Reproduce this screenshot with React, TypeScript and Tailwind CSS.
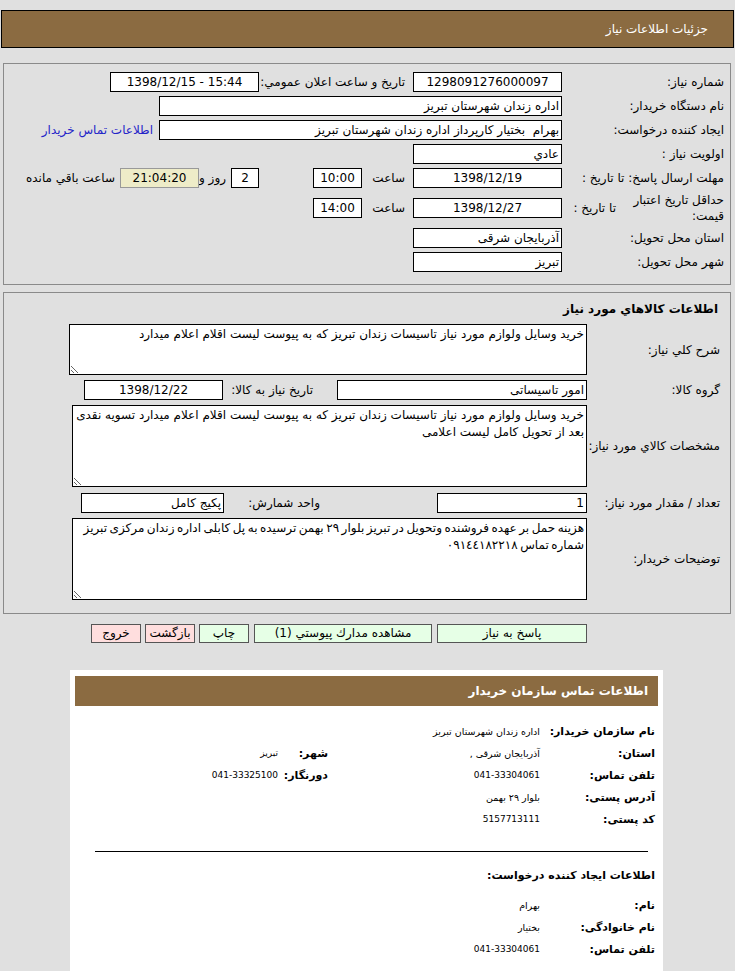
import type { ReactNode } from "react";

const font = "font-['DejaVu_Sans',Tahoma,sans-serif]";

type FieldProps = {
  className?: string;
  center?: boolean;
  ltr?: boolean;
  children?: ReactNode;
};

function Field({ className = "", center, ltr, children }: FieldProps) {
  return (
    <div
      dir={ltr ? "ltr" : undefined}
      className={`h-[20px] shrink-0 overflow-hidden whitespace-nowrap border border-black bg-white px-[2px] text-[12px] leading-[18px] text-black ${
        center ? "text-center" : "text-right"
      } ${className}`}
    >
      {children}
    </div>
  );
}

function Label({ className = "", children }: { className?: string; children: ReactNode }) {
  return (
    <div className={`shrink-0 whitespace-nowrap text-right text-[12px] text-black ${className}`}>
      {children}
    </div>
  );
}

function Area({ className = "", text }: { className?: string; text: string }) {
  return (
    <textarea
      readOnly
      dir="rtl"
      value={text}
      className={`shrink-0 border border-black bg-white px-[2px] pt-[1px] text-[12px] leading-[17px] text-black outline-none ${font} ${className}`}
    />
  );
}

function Btn({ className = "", pink, children }: { className?: string; pink?: boolean; children: ReactNode }) {
  return (
    <div
      className={`h-[19px] shrink-0 overflow-hidden whitespace-nowrap border border-[#555] text-center text-[12px] leading-[17px] text-black ${
        pink ? "bg-[#ffdede]" : "bg-[#e6ffe6]"
      } ${className}`}
    >
      {children}
    </div>
  );
}

function CardRow({
  label,
  value,
  label2,
  value2,
  small,
}: {
  label: string;
  value?: string;
  label2?: string;
  value2?: string;
  small?: boolean;
}) {
  return (
    <div className="flex h-[22px] items-center">
      <div className="w-[118px] shrink-0 whitespace-nowrap pr-[3px] text-right text-[11px] font-bold text-black">
        {label}
      </div>
      <div className={`w-[212px] shrink-0 text-right text-black ${small ? "text-[9.5px]" : "text-[9px]"}`}>{value}</div>
      <div className="w-[46px] shrink-0 whitespace-nowrap text-right text-[11px] font-bold text-black">{label2}</div>
      <div className="flex-1 pr-[4px] text-right text-[9px] text-black">{value2}</div>
    </div>
  );
}

export default function App() {
  return (
    <div dir="rtl" className={`min-h-screen bg-[#e0e0e0] pt-[10px] ${font}`}>
      <div className="mx-[1px] flex h-[38px] items-center border border-black bg-[#8b6b41] pr-[25px] text-[12px] text-white">
        جزئیات اطلاعات نیاز
      </div>

      {/* اطلاعات اصلی */}
      <div className="ml-[3px] mr-[4px] mt-[15px] border border-[#8a8a8a] pb-[10px] pt-[6px]">
        <div className="flex h-[24px] items-center">
          <Label className="w-[168px] pr-[6px]">شماره نیاز:</Label>
          <Field center className="w-[149px]">1298091276000097</Field>
          <Label className="w-[154px] pr-[8px]">تاریخ و ساعت اعلان عمومي:</Label>
          <Field center ltr className="w-[149px]">1398/12/15 - 15:44</Field>
        </div>
        <div className="flex h-[24px] items-center">
          <Label className="w-[168px] pr-[6px]">نام دستگاه خریدار:</Label>
          <Field className="w-[403px]">اداره زندان شهرستان تبریز</Field>
        </div>
        <div className="flex h-[24px] items-center">
          <Label className="w-[168px] pr-[6px]">ایجاد کننده درخواست:</Label>
          <Field className="w-[403px]">بهرام &nbsp;بختیار کارپرداز اداره زندان شهرستان تبریز</Field>
          <div className="pr-[6px] text-[12px] text-[#2424c8]">اطلاعات تماس خریدار</div>
        </div>
        <div className="flex h-[24px] items-center">
          <Label className="w-[168px] pr-[6px]">اولویت نیاز :</Label>
          <Field className="w-[149px]">عادي</Field>
        </div>
        <div className="flex h-[24px] items-center">
          <Label className="w-[168px] pr-[6px]">مهلت ارسال پاسخ: تا تاریخ :</Label>
          <Field center className="w-[149px]">1398/12/19</Field>
          <Label className="w-[51px] pr-[8px]">ساعت</Label>
          <Field center className="w-[49px]">10:00</Field>
          <div className="w-[54px] shrink-0" />
          <Field center className="w-[28px]">2</Field>
          <Label className="w-[32px] pr-[5px]">روز و</Label>
          <div className="h-[20px] w-[79px] shrink-0 border border-[#999] bg-[#eeecc8] text-center text-[12px] leading-[18px] text-black">
            21:04:20
          </div>
          <Label className="pr-[5px]">ساعت باقي مانده</Label>
        </div>
        <div className="flex h-[36px] items-center">
          <div className="w-[108px] shrink-0 pr-[6px] text-right text-[12px] leading-[16px] text-black">
            حداقل تاریخ اعتبار قیمت:
          </div>
          <Label className="w-[60px] pr-[6px]">تا تاریخ :</Label>
          <Field center className="w-[149px]">1398/12/27</Field>
          <Label className="w-[51px] pr-[8px]">ساعت</Label>
          <Field center className="w-[49px]">14:00</Field>
        </div>
        <div className="flex h-[24px] items-center">
          <Label className="w-[168px] pr-[6px]">استان محل تحویل:</Label>
          <Field className="w-[149px]">آذربایجان شرقی</Field>
        </div>
        <div className="flex h-[24px] items-center">
          <Label className="w-[168px] pr-[6px]">شهر محل تحویل:</Label>
          <Field className="w-[149px]">تبریز</Field>
        </div>
      </div>

      {/* کالاها */}
      <div className="ml-[3px] mr-[4px] mt-[7px] border border-[#8a8a8a] pb-[13px] pt-[7px]">
        <div className="h-[18px] pr-[12px] text-right text-[12px] font-bold leading-[18px] text-black">
          اطلاعات كالاهاي مورد نیاز
        </div>
        <div className="mt-[6px] flex items-center">
          <Label className="w-[143px] pr-[10px]">شرح کلي نیاز:</Label>
          <Area
            className="h-[51px] w-[518px]"
            text="خرید وسایل ولوازم مورد نیاز تاسیسات زندان تبریز که به پیوست لیست اقلام اعلام میدارد"
          />
        </div>
        <div className="mt-[5px] flex h-[20px] items-center">
          <Label className="w-[143px] pr-[10px]">گروه کالا:</Label>
          <Field className="w-[250px]">امور تاسیساتی</Field>
          <Label className="w-[114px] pr-[24px]">تاریخ نیاز به کالا:</Label>
          <Field center className="w-[139px]">1398/12/22</Field>
        </div>
        <div className="mt-[5px] flex items-center">
          <Label className="w-[143px] pr-[10px]">مشخصات کالاي مورد نیاز:</Label>
          <Area
            className="h-[82px] w-[515px]"
            text="خرید وسایل ولوازم مورد نیاز تاسیسات زندان تبریز که به پیوست لیست اقلام اعلام میدارد تسویه نقدی بعد از تحویل کامل لیست اعلامی"
          />
        </div>
        <div className="mt-[6px] flex h-[20px] items-center">
          <Label className="w-[143px] pr-[10px]">تعداد / مقدار مورد نیاز:</Label>
          <Field className="w-[150px]">1</Field>
          <Label className="w-[213px] pr-[117px]">واحد شمارش:</Label>
          <Field className="w-[143px]">پکیج کامل</Field>
        </div>
        <div className="mt-[5px] flex items-center">
          <Label className="w-[143px] pr-[10px]">توضیحات خریدار:</Label>
          <Area
            className="h-[82px] w-[515px] [word-spacing:-1.3px]"
            text="هزینه حمل بر عهده فروشنده وتحویل در تبریز بلوار ۲۹ بهمن ترسیده به پل کابلی اداره زندان مرکزی تبریز شماره تماس ٠٩١٤٤١٨٢٢١٨"
          />
        </div>
      </div>

      {/* دکمه‌ها */}
      <div className="mt-[10px] flex pr-[148px]">
        <Btn className="w-[150px]">پاسخ به نیاز</Btn>
        <Btn className="mr-[5px] w-[178px]">مشاهده مدارك پیوستي (1)</Btn>
        <Btn className="mr-[5px] w-[50px]">چاپ</Btn>
        <Btn pink className="mr-[4px] w-[50px]">
          بازگشت
        </Btn>
        <Btn pink className="mr-[4px] w-[50px]">
          خروج
        </Btn>
      </div>

      {/* اطلاعات تماس */}
      <div className="ml-[70px] mr-[72px] mt-[27px] bg-white px-[5px] pb-[30px] pt-[6px]">
        <div className="flex h-[30px] items-center bg-[#8b6b41] pr-[10px] text-[12px] font-bold text-white">
          اطلاعات تماس سازمان خریدار
        </div>
        <div className="mt-[15px]">
          <CardRow label="نام سازمان خریدار:" value="اداره زندان شهرستان تبریز" small />
          <CardRow label="استان:" value="آذربایجان شرقی ," label2="شهر:" value2="تبریز" small />
          <CardRow label="تلفن تماس:" value="041-33304061" label2="دورنگار:" value2="041-33325100" />
          <CardRow label="آدرس پستی:" value="بلوار ۲۹ بهمن" small />
          <CardRow label="کد پستی:" value="5157713111" />
        </div>
        <div className="ml-[20px] mr-[10px] mt-[20px] border-t border-black" />
        <div className="mt-[14px] h-[20px] pr-[3px] text-right text-[11px] font-bold leading-[20px] text-black">
          اطلاعات ایجاد کننده درخواست:
        </div>
        <div className="mt-[9px]">
          <CardRow label="نام:" value="بهرام" small />
          <CardRow label="نام خانوادگی:" value="بختیار" small />
          <CardRow label="تلفن تماس:" value="041-33304061" />
        </div>
      </div>
    </div>
  );
}
